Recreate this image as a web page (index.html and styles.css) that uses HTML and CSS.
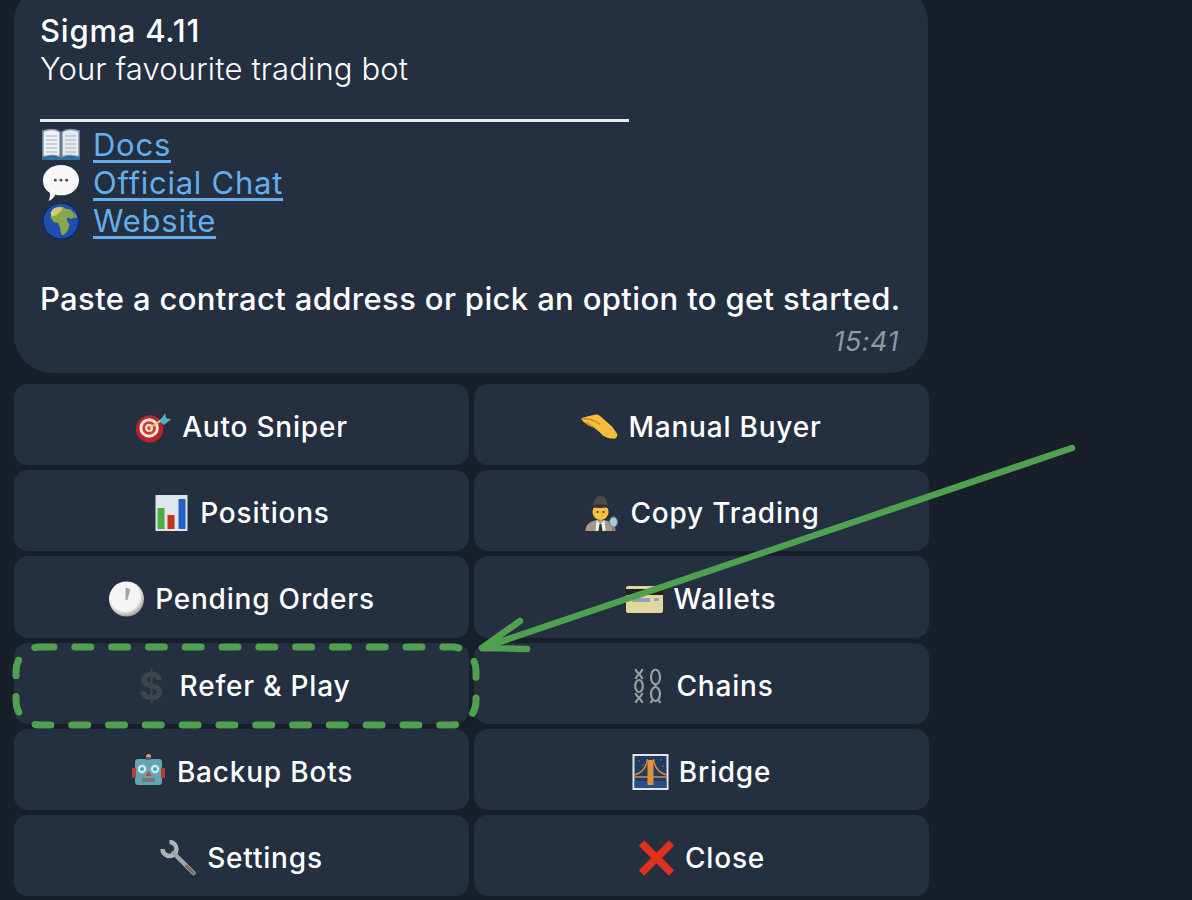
FILE: index.html
```html
<!DOCTYPE html>
<html lang="en">
<head>
<meta charset="utf-8">
<title>Sigma</title>
<link rel="stylesheet" href="styles.css">
</head>
<body>
<main class="chat">
  <section class="bubble">
    <p class="line strong title">Sigma 4.11</p>
    <p class="line tagline">Your favourite trading bot</p>
    <div class="rule"></div>
    <p class="line link-line">
      <svg class="ico-link book" viewBox="0 0 40 32"><path d="M2 2c6-2 13-2 17 1v25c-4-2-11-2-17 0z" fill="#eef0f3" stroke="#7f97ad" stroke-width="1.500"/><path d="M38 2c-6-2-13-2-17 1v25c4-2 11-2 17 0z" fill="#e6e9ed" stroke="#7f97ad" stroke-width="1.500"/><path d="M5 7h11M5 11h11M5 15h11M5 19h11M5 23h11M24 7h11M24 11h11M24 15h11M24 19h11M24 23h11" stroke="#a9b2bc" stroke-width="1.200"/><path d="M1 28c6-1 13-1 18 1h2c5-2 12-2 18-1v3H1z" fill="#2f6f9f"/></svg>
      <a href="#">Docs</a>
    </p>
    <p class="line link-line">
      <svg class="ico-link" viewBox="0 0 40 40"><path d="M20 1c11 0 19 7 19 16s-8 16-19 16c-2 0-4 0-6-1-1 3-4 6-7 7 1-3 2-6 1-9C3 27 1 22 1 17 1 8 9 1 20 1z" fill="#f7f7f8"/><circle cx="14" cy="17" r="1.500" fill="#444"/><circle cx="20" cy="17" r="1.500" fill="#444"/><circle cx="26" cy="17" r="1.500" fill="#444"/></svg>
      <a href="#">Official Chat</a>
    </p>
    <p class="line link-line">
      <svg class="ico-link" viewBox="0 0 40 40"><circle cx="20" cy="20" r="19.500" fill="#1d4fae"/><path d="M11 8c3-3 8-4 11-3l3 2 5 1 3 3 1 5-3 2-4-2-1 3 3 5-2 6-4 5-3-1-1-7-2-5-5-1-3-5 1-5z" fill="#8aa64a"/><path d="M12 7l7-2 3 3-4 3-3 3-5 1-1-4z" fill="#d8c777"/><path d="M34 10l3 6-3 1z" fill="#8aa64a"/><circle cx="20" cy="20" r="19" fill="none" stroke="#0e2a5c" stroke-width="1.500"/></svg>
      <a href="#">Website</a>
    </p>
    <div class="blank"></div>
    <p class="line strong prompt">Paste a contract address or pick an option to get started.</p>
    <div class="meta"><time>15:41</time></div>
  </section>

  <nav class="keyboard">
    <button class="key">
      <svg class="ico" viewBox="0 0 38 32"><circle cx="15" cy="18" r="14" fill="#b8242a"/><circle cx="14.500" cy="17" r="10" fill="#f2e6e0"/><circle cx="14.500" cy="17" r="7" fill="#cf3a36"/><circle cx="14.500" cy="17" r="4" fill="#f2e6e0"/><circle cx="14.500" cy="17" r="2" fill="#cf3a36"/><path d="M15 17l12-8" stroke="#e9c75f" stroke-width="2"/><path d="M25 10l6-8 1 5 5 1-7 6z" fill="#4fb3bd"/></svg>
      <span>Auto Sniper</span>
    </button>
    <button class="key">
      <svg class="ico" viewBox="0 0 37 25"><path d="M0 4C4 2 10 1 15 0c3 0 5 2 8 5l8 7 5 7c1 3-1 6-4 5-5 0-10-2-13-6l-6-5C9 12 3 9 0 4z" fill="#f6bd3c"/><path d="M1 4c5 0 10 1 14 3l4 3M13 13c-2-2-5-3-8-5" stroke="#c98a1d" stroke-width="1.300" fill="none"/></svg>
      <span>Manual Buyer</span>
    </button>
    <button class="key">
      <svg class="ico" viewBox="0 0 32 36"><rect width="32" height="36" fill="#dfe5ee"/><rect x="2" y="13" width="7" height="21" fill="#4cae3f"/><rect x="12" y="20" width="7" height="14" fill="#c5301f"/><rect x="23" y="4" width="7" height="30" fill="#2360c8"/></svg>
      <span>Positions</span>
    </button>
    <button class="key">
      <svg class="ico" viewBox="0 0 34 36"><path d="M1 36c0-7 5-11 15-11s15 4 15 11z" fill="#a89a85"/><path d="M12 25l4 4 4-4 1 11h-10z" fill="#eee"/><path d="M15 29h2l1 7h-4z" fill="#333"/><circle cx="16" cy="17" r="8" fill="#f5bf3f"/><circle cx="13" cy="17" r="1" fill="#333"/><circle cx="19" cy="17" r="1" fill="#333"/><path d="M9 11c0-7 3-10 7-10s7 3 7 10z" fill="#4b4b4b"/><path d="M2 11c8-2 20-2 28 0-8 2.500-20 2.500-28 0z" fill="#333"/><ellipse cx="29" cy="27" rx="4" ry="5" fill="#a8c8dc" stroke="#778"/><path d="M29 32v4" stroke="#778" stroke-width="2"/></svg>
      <span>Copy Trading</span>
    </button>
    <button class="key">
      <svg class="ico" viewBox="0 0 38 38"><defs><radialGradient id="clk" cx=".45" cy=".42" r=".62"><stop offset=".68" stop-color="#f6f5f3"/><stop offset="1" stop-color="#8f8a84"/></radialGradient></defs><circle cx="19" cy="19" r="18.500" fill="url(#clk)"/><path d="M18 20V7l1 0 4 2-3 11z" fill="#a3a3a3"/></svg>
      <span>Pending Orders</span>
    </button>
    <button class="key">
      <svg class="ico" viewBox="0 0 37 28"><rect y="1" width="37" height="27" rx="2" fill="#e2d79b"/><rect y="4" width="37" height="6" fill="#222"/><rect x="6" y="13" width="18" height="4" fill="#8fa4b8"/><rect x="28" y="13" width="5" height="3" fill="#8fa4b8"/></svg>
      <span>Wallets</span>
    </button>
    <button class="key">
      <span class="dollar">$</span>
      <span>Refer &amp; Play</span>
    </button>
    <button class="key">
      <svg class="ico" viewBox="0 0 30 36"><g fill="none" stroke="#9a9da1" stroke-width="2.200"><path d="M3 1c1 4 6 6 7 10M10 1C9 5 4 7 3 11"/><ellipse cx="6.500" cy="18" rx="3.800" ry="6"/><path d="M3 35c1-4 6-6 7-10M10 35c-1-4-6-6-7-10"/><ellipse cx="23" cy="9" rx="4.500" ry="7.500"/><ellipse cx="23" cy="26" rx="4.500" ry="7"/><path d="M23 15v5M20 32l-2 3M26 32l2 3"/></g></svg>
      <span>Chains</span>
    </button>
    <button class="key">
      <svg class="ico" viewBox="0 0 33 36"><path d="M1 36V0z" fill="none"/><rect x="3" y="5" width="27" height="26" rx="3" fill="#62a3b5"/><rect x="0" y="14" width="4" height="10" fill="#b5402e"/><rect x="29" y="14" width="4" height="10" fill="#b5402e"/><circle cx="16.500" cy="2.500" r="2.500" fill="#e7a83a"/><rect x="14" y="3" width="5" height="3" fill="#6b4aa0"/><circle cx="10" cy="15" r="4.500" fill="#d5eef5" stroke="#8ab"/><circle cx="23" cy="15" r="4.500" fill="#d5eef5" stroke="#8ab"/><circle cx="10" cy="15" r="2" fill="#3ab"/><circle cx="23" cy="15" r="2" fill="#3ab"/><path d="M16.500 17l3 5h-6z" fill="#d2402e"/><rect x="10" y="24" width="13" height="4" fill="#777"/></svg>
      <span>Backup Bots</span>
    </button>
    <button class="key">
      <svg class="ico" viewBox="0 0 36 36"><rect x="1" y="1" width="34" height="34" fill="#1f3a63" stroke="#dfe5ea" stroke-width="2"/><rect x="2" y="27" width="32" height="7" fill="#27508a"/><path d="M2 21c7-2 12-7 13-16M21 5c1 9 6 14 13 16M2 23h32" stroke="#d98a3a" stroke-width="1.500" fill="none"/><rect x="15" y="6" width="6" height="25" fill="#e09036"/><path d="M6 7h1M28 6h1M10 11h1M30 12h1" stroke="#c9c27a"/></svg>
      <span>Bridge</span>
    </button>
    <button class="key">
      <svg class="ico" viewBox="0 0 36 36"><path d="M2 9A7 7 0 1 0 9 2" fill="none" stroke="#b0b4b8" stroke-width="4.500"/><path d="M13 13L33 33" stroke="#a2a6aa" stroke-width="4.500" stroke-linecap="round"/><path d="M26 26l7 7" stroke="#7d6a5a" stroke-width="2.500" stroke-linecap="round"/></svg>
      <span>Settings</span>
    </button>
    <button class="key">
      <svg class="ico" viewBox="0 0 36 36"><path d="M3 3l30 30M33 3L3 33" stroke="#e0301e" stroke-width="7.500"/></svg>
      <span>Close</span>
    </button>
  </nav>
</main>

<svg class="annotation" viewBox="0 0 1192 900" aria-hidden="true">
  <rect class="mark dashed" x="16" y="647" width="460" height="78" rx="24" stroke-dasharray="16 20.800" stroke-dashoffset="2"/>
  <path class="mark" d="M1072 448L482 648M482 648L520 621M482 648L527 649"/>
</svg>
</body>
</html>
```
FILE: styles.css
```css
* { box-sizing: border-box; }
html, body { margin: 0; height: 900px; overflow: hidden; }
body {
  background: #181e2a;
  color: #fff;
  font-family: Inter, "Noto Sans", sans-serif;
  font-size: 31px;
  position: relative;
}
.chat { width: 930px; padding-left: 14px; }
.bubble {
  width: 914px;
  height: 389px;
  margin-top: -16px;
  padding: 28px 26px 0;
  background: #242f3f;
  border-radius: 38px;
}
.line {
  margin: 0;
  height: 38px;
  line-height: 38px;
  white-space: nowrap;
  font-weight: 300;
}
.strong { font-weight: 500; }
.title { letter-spacing: .8px; }
.tagline { letter-spacing: .15px; }
.prompt { letter-spacing: .36px; }
.rule {
  width: 589px;
  height: 34px;
  margin-bottom: 4px;
  border-bottom: 3px solid #e8ebee;
}
.link-line { display: flex; align-items: center; gap: 12px; }
.link-line a {
  color: #64aeee;
  font-weight: 400;
  letter-spacing: .75px;
  text-decoration: underline;
  text-underline-offset: 4px;
  text-decoration-thickness: 3px;
}
.ico-link { width: 40px; height: 38px; flex: none; margin-left: 1px; }
.blank { height: 40px; }
.meta {
  display: flex;
  justify-content: flex-end;
  margin-top: 9px;
  padding-right: 3px;
}
.meta time {
  font-size: 27px;
  font-style: italic;
  font-weight: 400;
  letter-spacing: .5px;
  color: #8b98a8;
  line-height: 30px;
}
.keyboard {
  display: grid;
  grid-template-columns: 455px 455px;
  grid-auto-rows: 81.2px;
  gap: 5px;
  margin-top: 11px;
  width: 915px;
}
.key {
  display: flex;
  align-items: center;
  justify-content: center;
  gap: 10px;
  border: 0;
  padding: 5px 0 0;
  background: #242f3f;
  border-radius: 14px;
  color: #fff;
  font: 500 28px Inter, "Noto Sans", sans-serif;
  letter-spacing: .8px;
}
.ico { width: 37px; height: 36px; flex: none; }
.dollar {
  color: #3f434a;
  font-weight: 700;
  font-size: 38px;
  line-height: 36px;
  width: 37px;
  text-align: center;
  letter-spacing: 0;
}
.annotation { position: absolute; left: 0; top: 0; width: 1192px; height: 900px; pointer-events: none; }
.mark { fill: none; stroke: #4fa04f; stroke-width: 6.500; stroke-linecap: round; }
.dashed { stroke-width: 7; }
```
